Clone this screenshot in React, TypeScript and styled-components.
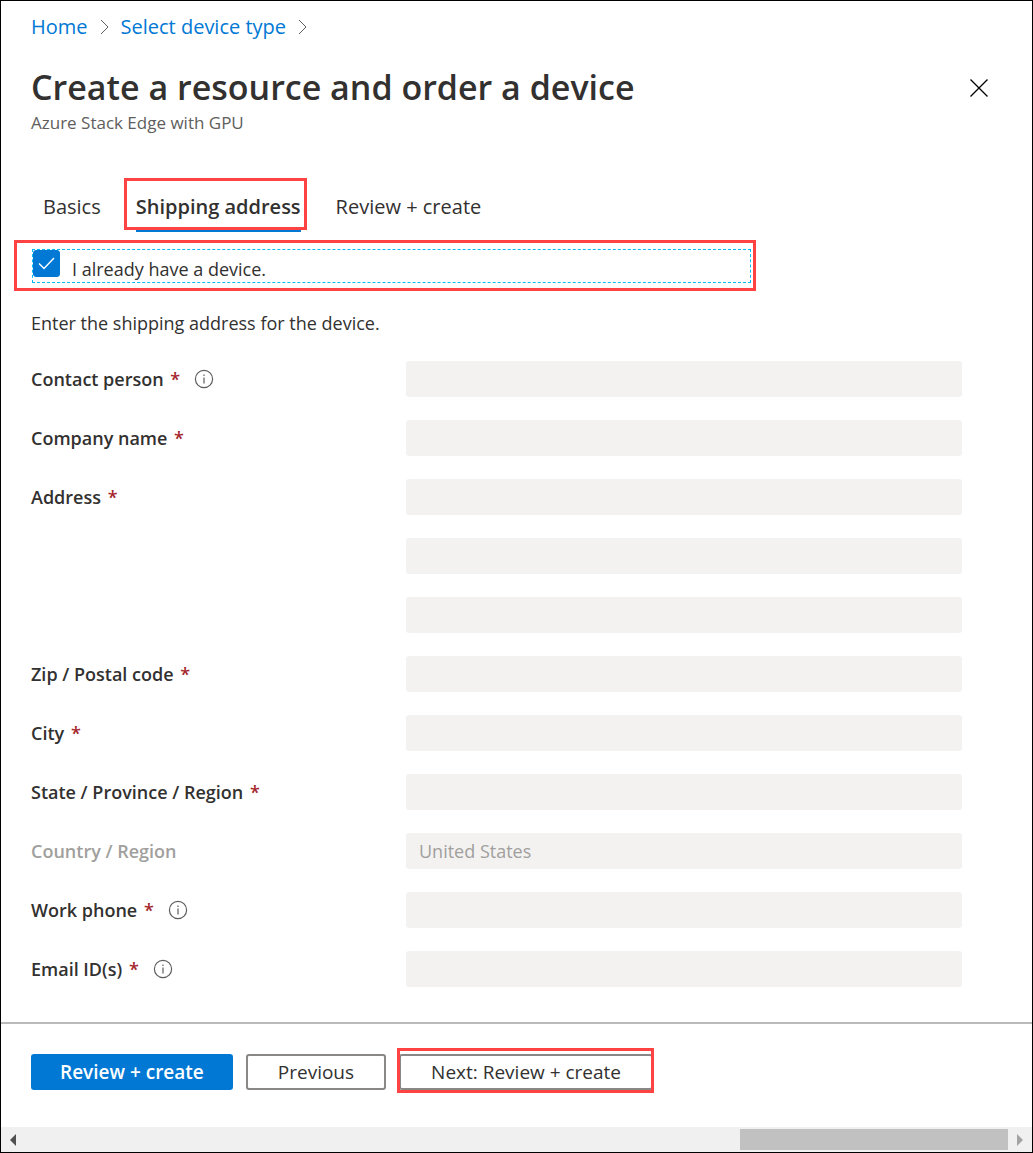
import React, { useId, useState } from "react";
import styled, { createGlobalStyle, css } from "styled-components";

const color = {
  text: "#323130",
  muted: "#605e5c",
  disabled: "#a19f9d",
  field: "#f3f2f1",
  blue: "#0078d4",
  callout: "#ff4343",
  required: "#a4262c",
};

const GlobalStyle = createGlobalStyle`
  *, *::before, *::after { box-sizing: border-box; }
  body {
    margin: 0;
    background: #fff;
    color: ${color.text};
    font-family: "Open Sans", "Noto Sans", sans-serif;
    font-size: 18px;
    line-height: 24px;
  }
  button, input, select { font: inherit; color: inherit; }
`;

const Frame = styled.div`
  display: flex;
  flex-direction: column;
  min-height: 100vh;
  border: 1px solid #000;
`;

const Content = styled.main`
  flex: 1;
  padding: 12px 30px 35px;
`;

const Breadcrumb = styled.nav`
  display: flex;
  align-items: center;
  gap: 12px;
  font-size: 20px;
  line-height: 28px;
`;

const Crumb = styled.a`
  color: ${color.blue};
  text-decoration: none;
`;

const Header = styled.header`
  display: flex;
  align-items: flex-start;
  justify-content: space-between;
  margin-top: 24px;
`;

const Title = styled.h1`
  margin: 0;
  font-size: 34px;
  font-weight: 600;
  line-height: 44px;
`;

const Subtitle = styled.p`
  margin: 0;
  color: ${color.muted};
  font-size: 17px;
  line-height: 28px;
`;

const IconButton = styled.button`
  display: grid;
  place-items: center;
  padding: 0;
  border: 0;
  background: none;
`;

const CloseButton = styled(IconButton)`
  width: 46px;
  height: 46px;
`;

const calloutBox = css`
  position: absolute;
  border: 3px solid ${color.callout};
  pointer-events: none;
`;

const Tabs = styled.div`
  display: flex;
  gap: 11px;
  margin-top: 46px;
`;

const Tab = styled.button<{ $active?: boolean }>`
  position: relative;
  padding: 0 12px;
  border: 0;
  background: none;
  font-size: 20px;
  font-weight: ${(p) => (p.$active ? 600 : 400)};
  line-height: 48px;

  ${(p) =>
    p.$active &&
    css`
      &::after {
        content: "";
        position: absolute;
        right: 12px;
        bottom: -1px;
        left: 12px;
        height: 3px;
        background: ${color.blue};
      }
    `}
`;

const TabCallout = styled.span`
  ${calloutBox}
  z-index: 1;
  inset: -5px 6px 1px 0;
`;

const DeviceRow = styled.div`
  position: relative;
  display: flex;
  max-width: 719px;
  height: 34px;
  margin-top: 18px;
  margin-left: 1px;
  border: 1px dashed #00bcf2;
`;

const DeviceCallout = styled.span`
  ${calloutBox}
  inset: -10px -6px -9px -19px;
`;

const CheckLabel = styled.label`
  display: flex;
  gap: 12px;
  line-height: 38px;
`;

const CheckBox = styled.span`
  display: grid;
  width: 27px;
  height: 27px;

  > * {
    grid-area: 1 / 1;
    place-self: center;
    pointer-events: none;
  }
`;

const CheckInput = styled.input`
  && { place-self: stretch; pointer-events: auto; }
  appearance: none;
  margin: 0;
  border: 1px solid ${color.blue};
  border-radius: 3px;

  &:checked { background: ${color.blue}; }
`;

const Intro = styled.p`
  margin: 28px 0 26px;
`;

const Form = styled.form`
  display: grid;
  gap: 23px;
  padding-right: 40px;
`;

const Row = styled.div`
  display: grid;
  grid-template-columns: minmax(200px, 375px) minmax(0, 1fr);
  align-items: center;
`;

const LabelCell = styled.div`
  display: flex;
  align-items: center;
  gap: 14px;
`;

const Label = styled.label<{ $disabled?: boolean }>`
  color: ${(p) => (p.$disabled ? color.disabled : color.text)};
  font-weight: 600;
`;

const Required = styled.span`
  margin-left: 2px;
  color: ${color.required};
`;

const fieldStyle = css`
  width: 100%;
  height: 36px;
  padding: 0 13px;
  border: 0;
  border-radius: 3px;
  background: ${color.field};
  opacity: 1;
`;

const Field = styled.input`
  ${fieldStyle}
`;

const SelectField = styled.select`
  ${fieldStyle}
  appearance: none;
  color: ${color.disabled};
`;

const Footer = styled.footer`
  display: flex;
  gap: 13px;
  padding: 30px 30px 37px;
  border-top: 2px solid #bababa;
`;

const Button = styled.button<{ $primary?: boolean }>`
  position: relative;
  height: 36px;
  padding: 0 ${(p) => (p.$primary ? 27 : 30)}px;
  border: 2px solid ${(p) => (p.$primary ? color.blue : "#8a8886")};
  border-radius: 3px;
  background: ${(p) => (p.$primary ? color.blue : "#fff")};
  color: ${(p) => (p.$primary ? "#fff" : color.text)};
  font-size: 19px;
  font-weight: ${(p) => (p.$primary ? 600 : 400)};
  line-height: 30px;
`;

const ButtonCallout = styled.span`
  ${calloutBox}
  inset: -8px -3px -5px -4px;
`;

const Scrollbar = styled.div`
  display: flex;
  align-items: center;
  height: 25px;
  background: #f0f0f0;
`;

const ScrollArrow = styled(IconButton)`
  width: 24px;
  height: 25px;
`;

const Track = styled.div`
  display: grid;
  flex: 1;
  grid-template-columns: 8fr 3fr;
`;

const Thumb = styled.div`
  grid-column: 2;
  height: 21px;
  background: #c1c1c1;
`;

const Chevron = () => (
  <svg width="9" height="16" viewBox="0 0 9 16" fill="none" stroke="#605e5c" aria-hidden="true">
    <path d="M1 1l7 7-7 7" />
  </svg>
);

const InfoIcon = () => (
  <svg width="20" height="20" viewBox="0 0 20 20" fill="none" stroke="#605e5c" aria-hidden="true">
    <circle cx="10" cy="10" r="8.6" strokeWidth="1.2" />
    <path d="M10 8.5v6M10 5.5v1.5" strokeWidth="1.2" />
  </svg>
);

type FieldSpec = {
  label?: string;
  name: string;
  required?: boolean;
  info?: boolean;
  option?: string;
};

const fields: FieldSpec[] = [
  { label: "Contact person", name: "contact", required: true, info: true },
  { label: "Company name", name: "company", required: true },
  { label: "Address", name: "address1", required: true },
  { name: "Address line 2" },
  { name: "Address line 3" },
  { label: "Zip / Postal code", name: "zip", required: true },
  { label: "City", name: "city", required: true },
  { label: "State / Province / Region", name: "state", required: true },
  { label: "Country / Region", name: "country", option: "United States" },
  { label: "Work phone", name: "phone", required: true, info: true },
  { label: "Email ID(s)", name: "email", required: true, info: true },
];

function FormRow({ label, name, required, info, option }: FieldSpec) {
  const id = useId();
  return (
    <Row>
      <LabelCell>
        {label && (
          <Label htmlFor={id} $disabled={!!option}>
            {label} {required && <Required>*</Required>}
          </Label>
        )}
        {info && (
          <IconButton type="button" aria-label={`About ${label}`}>
            <InfoIcon />
          </IconButton>
        )}
      </LabelCell>
      {option ? (
        <SelectField id={id} name={name} disabled>
          <option>{option}</option>
        </SelectField>
      ) : (
        <Field id={id} name={name} aria-label={label ? undefined : name} disabled />
      )}
    </Row>
  );
}

export default function App() {
  const [hasDevice, setHasDevice] = useState(true);
  return (
    <>
      <GlobalStyle />
      <Frame>
        <Content>
          <Breadcrumb aria-label="Breadcrumb">
            <Crumb href="#home">Home</Crumb>
            <Chevron />
            <Crumb href="#device-type">Select device type</Crumb>
            <Chevron />
          </Breadcrumb>
          <Header>
            <div>
              <Title>Create a resource and order a device</Title>
              <Subtitle>Azure Stack Edge with GPU</Subtitle>
            </div>
            <CloseButton type="button" aria-label="Close">
              <svg width="18" height="18" viewBox="0 0 18 18" stroke="#000" strokeWidth="1.3">
                <path d="M0.5 0.5l17 17M17.5 0.5l-17 17" />
              </svg>
            </CloseButton>
          </Header>
          <Tabs role="tablist">
            <Tab type="button" role="tab">Basics</Tab>
            <Tab type="button" role="tab" aria-selected $active>
              Shipping address
              <TabCallout />
            </Tab>
            <Tab type="button" role="tab">Review + create</Tab>
          </Tabs>
          <DeviceRow>
            <CheckLabel>
              <CheckBox>
                <CheckInput
                  type="checkbox"
                  checked={hasDevice}
                  onChange={(e) => setHasDevice(e.target.checked)}
                />
                <svg width="17" height="13" viewBox="0 0 17 13" fill="none" stroke="#fff" strokeWidth="1.4">
                  <path d="M1 6.5l5 5L16 1" />
                </svg>
              </CheckBox>
              I already have a device.
            </CheckLabel>
            <DeviceCallout />
          </DeviceRow>
          <Intro>Enter the shipping address for the device.</Intro>
          <Form>
            {fields.map((field) => (
              <FormRow key={field.name} {...field} />
            ))}
          </Form>
        </Content>
        <Footer>
          <Button type="button" $primary>Review + create</Button>
          <Button type="button">Previous</Button>
          <Button type="button">
            Next: Review + create
            <ButtonCallout />
          </Button>
        </Footer>
        <Scrollbar>
          <ScrollArrow type="button" aria-label="Scroll left">
            <svg width="6" height="12" viewBox="0 0 6 12"><path d="M6 0v12L0 6z" fill="#505050" /></svg>
          </ScrollArrow>
          <Track><Thumb /></Track>
          <ScrollArrow type="button" aria-label="Scroll right">
            <svg width="6" height="12" viewBox="0 0 6 12"><path d="M0 0v12l6-6z" fill="#a3a3a3" /></svg>
          </ScrollArrow>
        </Scrollbar>
      </Frame>
    </>
  );
}
